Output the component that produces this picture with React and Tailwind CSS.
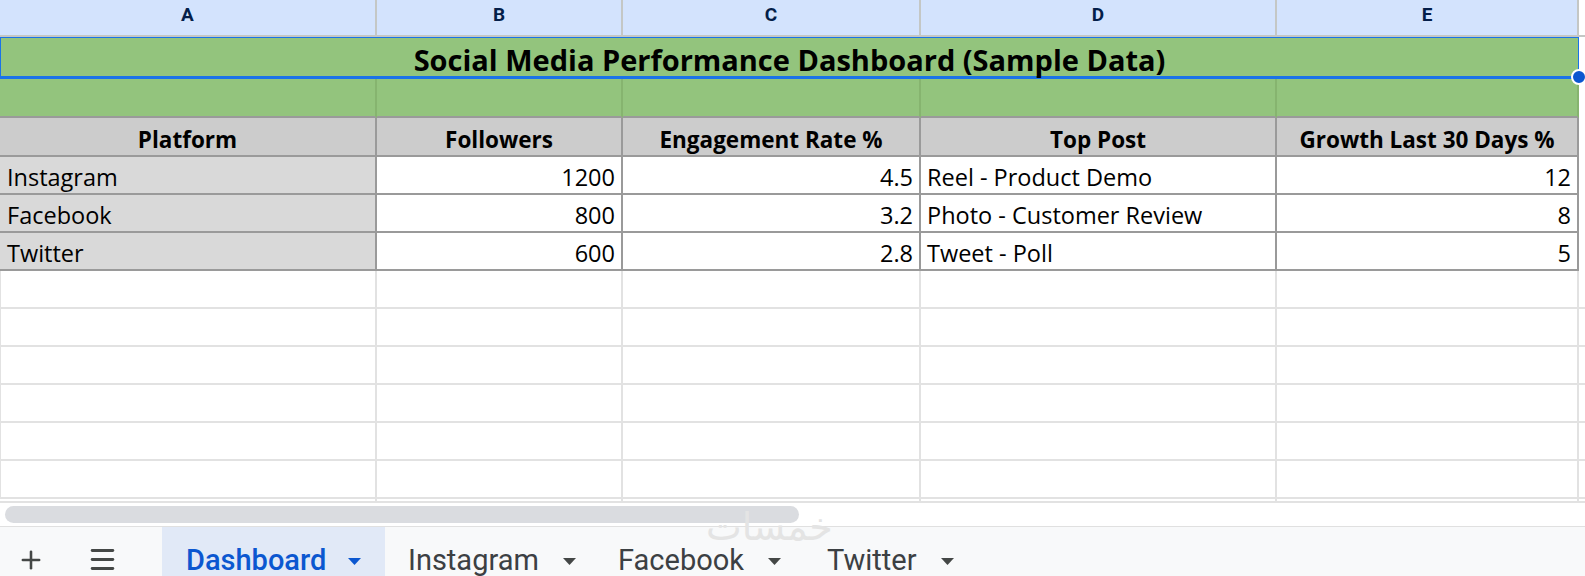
import React from 'react';
import { Plus, Menu } from 'lucide-react';

const cols = 'grid grid-cols-[377px_246px_298px_356px_302px_1fr]';
const cellFont = { fontFamily: '"Open Sans", "Noto Sans", sans-serif' };

const rows = [
    { platform: 'Instagram', followers: 1200, rate: '4.5', post: 'Reel - Product Demo', growth: 12 },
    { platform: 'Facebook', followers: 800, rate: '3.2', post: 'Photo - Customer Review', growth: 8 },
    { platform: 'Twitter', followers: 600, rate: '2.8', post: 'Tweet - Poll', growth: 5 },
];

const Caret = ({ className }) => (
    <svg width="13" height="7" viewBox="0 0 13 7" className={className}>
        <path d="M0 0 L13 0 L6.5 7 Z" fill="currentColor" />
    </svg>
);

const App = () => {
    return (
        <div className="relative w-[1585px] h-[576px] overflow-hidden bg-white" style={cellFont}>
            {/* column letters */}
            <div className={`${cols} h-[37px] border-b-2 border-[#c4c7c5]`}>
                {['A', 'B', 'C', 'D', 'E'].map(l => (
                    <div
                        key={l}
                        className="flex items-center justify-center pb-[4px] bg-[#d3e3fd] border-r-2 border-[#c4c7c5] text-[19px] font-bold text-[#041e49]"
                        style={{ fontFamily: 'Roboto, Arial, sans-serif' }}
                    >
                        {l}
                    </div>
                ))}
                <div />
            </div>

            {/* title row, merged A1:E1 */}
            <div className={`${cols} h-[42px]`}>
                <div className="relative col-span-5 flex items-end justify-center bg-[#93c47d] border border-b-[3px] border-[#1a73e8]">
                    <span className="text-[29px] font-bold text-black leading-[33px]">
                        Social Media Performance Dashboard (Sample Data)
                    </span>
                    <div className="absolute -right-[9px] -bottom-[9px] w-[16px] h-[16px] rounded-full bg-[#0b57d0] border-2 border-white" />
                </div>
                <div />
            </div>

            {/* empty green row */}
            <div className={`${cols} h-[39px]`}>
                {[0, 1, 2, 3, 4].map(i => (
                    <div key={i} className="bg-[#93c47d] border-r-2 border-b-2 border-r-[#86b46f] border-b-[#9a9a9a]" />
                ))}
                <div />
            </div>

            {/* table header */}
            <div className={`${cols} h-[39px]`}>
                {['Platform', 'Followers', 'Engagement Rate %', 'Top Post', 'Growth Last 30 Days %'].map(h => (
                    <div
                        key={h}
                        className="flex items-end justify-center pb-[1px] bg-[#cccccc] border-r-2 border-b-2 border-[#9a9a9a] text-[22.5px] font-bold text-black leading-tight"
                    >
                        {h}
                    </div>
                ))}
                <div />
            </div>

            {/* data */}
            {rows.map(r => (
                <div key={r.platform} className={`${cols} h-[38px] text-[23.5px] text-black leading-tight`}>
                    <div className="flex items-end pb-[1px] px-[7px] bg-[#d9d9d9] border-r-2 border-b-2 border-[#9a9a9a]">{r.platform}</div>
                    <div className="flex items-end justify-end pb-[1px] px-[6px] border-r-2 border-b-2 border-[#9a9a9a]">{r.followers}</div>
                    <div className="flex items-end justify-end pb-[1px] px-[6px] border-r-2 border-b-2 border-[#9a9a9a]">{r.rate}</div>
                    <div className="flex items-end pb-[1px] px-[6px] border-r-2 border-b-2 border-[#9a9a9a]">{r.post}</div>
                    <div className="flex items-end justify-end pb-[1px] px-[6px] border-r-2 border-b-2 border-[#9a9a9a]">{r.growth}</div>
                    <div />
                </div>
            ))}

            {/* empty rows */}
            {[0, 1, 2, 3, 4, 5].map(i => (
                <div key={i} className={`${cols} h-[38px]`}>
                    {[0, 1, 2, 3, 4].map(j => (
                        <div key={j} className={`border-r-2 border-b-2 border-[#e2e2e2] ${j === 0 ? 'border-l' : ''}`} />
                    ))}
                    <div className="border-b-2 border-[#e2e2e2]" />
                </div>
            ))}
            <div className={`${cols} h-[4px]`}>
                {[0, 1, 2, 3, 4].map(j => (
                    <div key={j} className="border-r-2 border-b-2 border-[#e2e2e2]" />
                ))}
                <div className="border-b-2 border-[#e2e2e2]" />
            </div>

            {/* horizontal scrollbar */}
            <div className="h-[23px] pt-[3px] pl-[5px]">
                <div className="w-[794px] h-[17px] rounded-full bg-[#dadce0]" />
            </div>

            {/* sheet tabs */}
            <div
                className="flex h-[50px] items-end bg-[#f8f9fa] border-t border-[#e0e0e0] text-[29px] text-[#3c4043]"
                style={{ fontFamily: 'Roboto, Arial, sans-serif' }}
            >
                <div className="flex items-center h-full w-[162px] pt-[16px]">
                    <Plus className="ml-[17px] w-[28px] h-[28px] text-[#444746]" strokeWidth={2.2} />
                    <Menu className="ml-[42px] w-[31px] h-[31px] text-[#444746]" strokeWidth={2.2} />
                </div>
                <div className="flex items-end h-full w-[223px] bg-[#e1e9f7] pl-[24px] text-[#0b57d0] font-medium leading-none pb-[1px]">
                    <span>Dashboard</span>
                    <Caret className="ml-[22px] mb-[10px]" />
                </div>
                <div className="flex items-end h-full w-[211px] pl-[23px] leading-none pb-[1px]">
                    <span>Instagram</span>
                    <Caret className="ml-[24px] mb-[10px] text-[#444746]" />
                </div>
                <div className="flex items-end h-full w-[207px] pl-[22px] leading-none pb-[1px]">
                    <span>Facebook</span>
                    <Caret className="ml-[24px] mb-[10px] text-[#444746]" />
                </div>
                <div className="flex items-end h-full pl-[24px] leading-none pb-[1px]">
                    <span>Twitter</span>
                    <Caret className="ml-[24px] mb-[10px] text-[#444746]" />
                </div>
            </div>

            {/* watermark */}
            <div
                className="absolute left-[706px] top-[508px] text-[38px] leading-none text-[#e4e4e4] pointer-events-none"
                style={{ fontFamily: '"DejaVu Sans", sans-serif' }}
                dir="rtl"
            >
                خمسات
            </div>
        </div>
    );
};

export default App;
